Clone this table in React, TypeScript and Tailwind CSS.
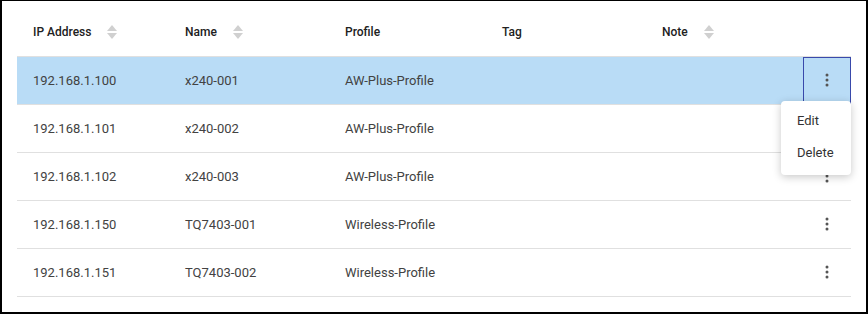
import { useState } from 'react'

type Device = {
  ip: string
  name: string
  profile: string
  tag: string
  note: string
}

const devices: Device[] = [
  { ip: '192.168.1.100', name: 'x240-001', profile: 'AW-Plus-Profile', tag: '', note: '' },
  { ip: '192.168.1.101', name: 'x240-002', profile: 'AW-Plus-Profile', tag: '', note: '' },
  { ip: '192.168.1.102', name: 'x240-003', profile: 'AW-Plus-Profile', tag: '', note: '' },
  { ip: '192.168.1.150', name: 'TQ7403-001', profile: 'Wireless-Profile', tag: '', note: '' },
  { ip: '192.168.1.151', name: 'TQ7403-002', profile: 'Wireless-Profile', tag: '', note: '' },
]

function SortIcon() {
  return (
    <svg width="10" height="14" viewBox="0 0 10 14" className="ml-4 shrink-0" fill="#d0d0d0">
      <path d="M5 0 L10 6 H0 Z" />
      <path d="M0 8 H10 L5 14 Z" />
    </svg>
  )
}

function KebabIcon() {
  return (
    <svg width="4" height="14" viewBox="0 0 4 14" fill="#555">
      <circle cx="2" cy="2" r="1.5" />
      <circle cx="2" cy="7" r="1.5" />
      <circle cx="2" cy="12" r="1.5" />
    </svg>
  )
}

export default function App() {
  const [openRow, setOpenRow] = useState<number | null>(0)

  return (
    <div
      className="w-[868px] h-[314px] bg-white border-l-2 border-r-2 border-b-2 border-t border-black px-[15px] overflow-hidden"
      style={{ fontFamily: 'Roboto, "Liberation Sans", sans-serif' }}
    >
      <div className="relative">
        <table className="table-fixed w-[834px] border-collapse">
          <colgroup>
            <col className="w-[152px]" />
            <col className="w-[160px]" />
            <col className="w-[157px]" />
            <col className="w-[160px]" />
            <col className="w-[157px]" />
            <col className="w-[48px]" />
          </colgroup>
          <thead>
            <tr className="h-[55px] border-b border-[#e0e0e0] text-[12px] font-medium text-[#212121]">
              <th className="px-4 pt-[8px] text-left font-medium">
                <div className="flex items-center">IP Address<SortIcon /></div>
              </th>
              <th className="px-4 pt-[8px] text-left font-medium">
                <div className="flex items-center">Name<SortIcon /></div>
              </th>
              <th className="px-4 pt-[8px] text-left font-medium">Profile</th>
              <th className="px-4 pt-[8px] text-left font-medium">Tag</th>
              <th className="px-4 pt-[8px] text-left font-medium">
                <div className="flex items-center">Note<SortIcon /></div>
              </th>
              <th />
            </tr>
          </thead>
          <tbody>
            {devices.map((d, i) => (
              <tr
                key={d.ip}
                className={`h-[48px] border-b border-[#e0e0e0] text-[13px] text-[#424242] ${
                  i === openRow ? 'bg-[#b9dcf6]' : 'bg-white'
                }`}
              >
                <td className="px-4 pt-[2px]">{d.ip}</td>
                <td className="px-4 pt-[2px]">{d.name}</td>
                <td className="px-4 pt-[2px]">{d.profile}</td>
                <td className="px-4 pt-[2px]">{d.tag}</td>
                <td className="px-4 pt-[2px]">{d.note}</td>
                <td className="p-0">
                  <button
                    onClick={() => setOpenRow(openRow === i ? null : i)}
                    className={`w-[48px] h-[47px] flex items-center justify-center ${
                      i === openRow ? 'outline outline-1 -outline-offset-1 outline-[#3949ab]' : ''
                    }`}
                  >
                    <KebabIcon />
                  </button>
                </td>
              </tr>
            ))}
          </tbody>
        </table>

        {openRow !== null && (
          <div
            className="absolute right-0 w-[70px] pt-[4px] pb-[6px] bg-white rounded-[4px] shadow-[0_2px_8px_rgba(0,0,0,0.22)] text-[13px] text-[#333]"
            style={{ top: 100 + openRow * 48 }}
          >
            <div className="h-[32px] flex items-center pl-4">Edit</div>
            <div className="h-[32px] flex items-center pl-4">Delete</div>
          </div>
        )}
      </div>
    </div>
  )
}
